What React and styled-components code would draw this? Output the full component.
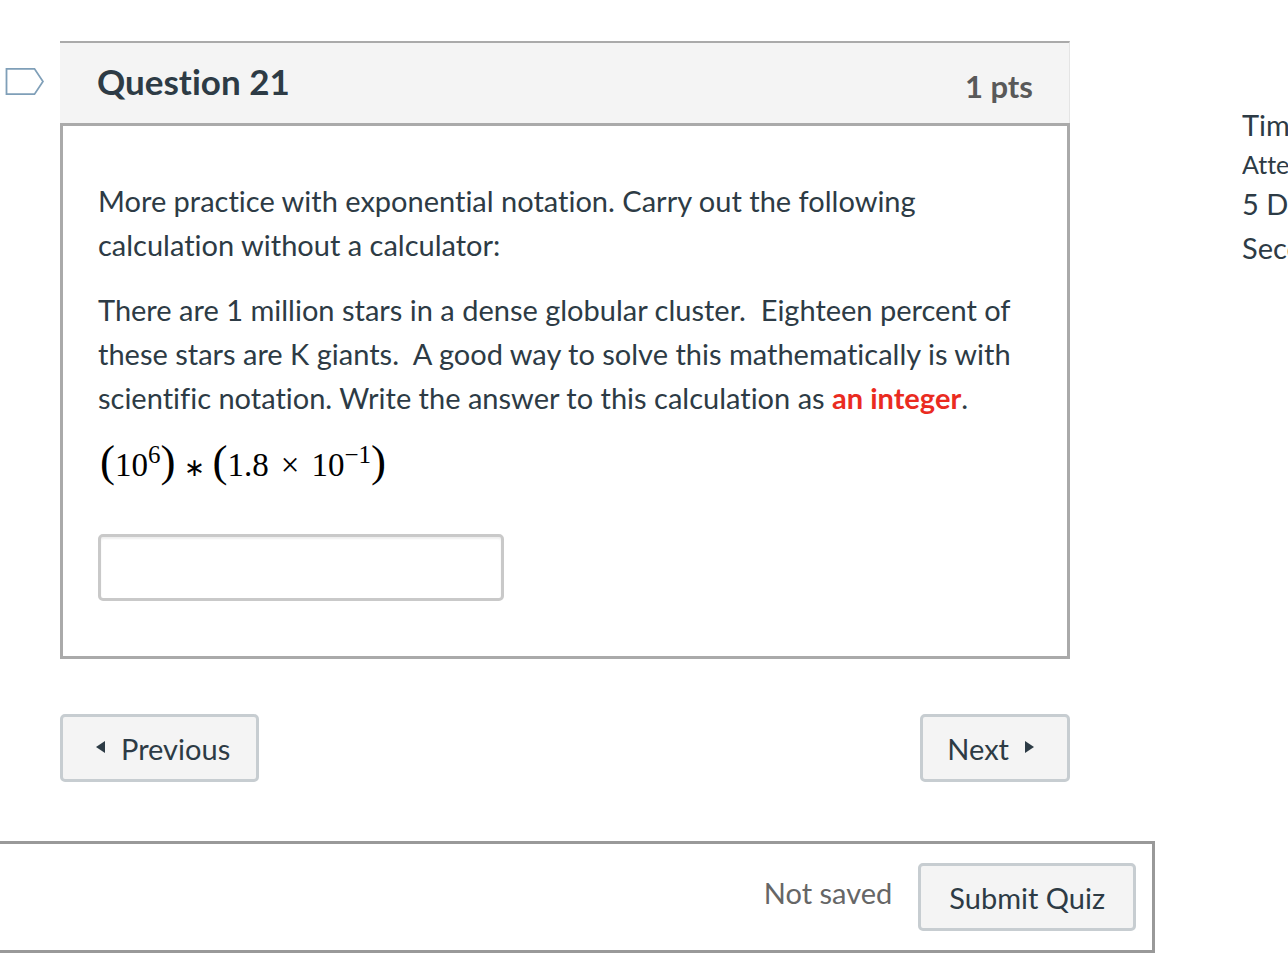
import React from "react";
import styled, { createGlobalStyle } from "styled-components";

const GlobalStyle = createGlobalStyle`
  *, *::before, *::after { box-sizing: border-box; }
  body {
    margin: 0;
    background: #fff;
    color: #2d3b45;
    font-family: Lato, "Liberation Sans", sans-serif;
    font-size: 29px;
    font-variant-ligatures: none;
    line-height: 44px;
    -webkit-font-smoothing: antialiased;
  }
`;

const Page = styled.div`
  display: flex;
  align-items: flex-start;
  padding-top: 41px;
  overflow: hidden;
`;

const Main = styled.main`
  flex: 1;
  min-width: 0;
`;

const QuestionRow = styled.div`
  display: grid;
  grid-template-columns: 60px 1fr;
  align-items: start;
  padding-right: 85px;
`;

const FlagButton = styled.button`
  display: block;
  margin: 26px 0 0 5px;
  padding: 0;
  border: 0;
  background: none;
  cursor: pointer;

  svg { display: block; }
`;

const Card = styled.article`
  min-width: 0;
`;

const CardHeader = styled.header`
  display: flex;
  justify-content: space-between;
  padding: 16px 36px 20px 37px;
  border-top: 2px solid #aaa;
  border-right: 1px solid #e4e4e4;
  background: #f4f4f4;
`;

const Title = styled.h2`
  margin: 0;
  font-size: 35px;
  line-height: 44px;
  font-weight: 700;
`;

const Points = styled.span`
  padding-top: 10px;
  color: #595959;
  font-size: 31px;
  line-height: 34px;
  font-weight: 700;
`;

const CardBody = styled.div`
  padding: 53px 35px 55px;
  border: 3px solid #aaa;
`;

const Paragraph = styled.p`
  margin: 0 0 21px;
`;

const Emphasis = styled.strong`
  color: #ea2b1f;
  font-weight: 700;
`;

const Formula = styled.div`
  display: flex;
  align-items: baseline;
  height: 44px;
  margin-bottom: 49px;
  padding-left: 2px;
  color: #000;
  font-family: "Liberation Serif", serif;
  font-size: 33px;
  line-height: 40px;
`;

const Paren = styled.span`
  font-size: 45px;
`;

const Operator = styled.span`
  padding: 0 ${(p) => (p.$small ? 8 : 12)}px;
  font-size: ${(p) => (p.$small ? 25 : 33)}px;
`;

const Power = styled.sup`
  align-self: flex-start;
  font-size: 25px;
  line-height: 28px;
`;

const AnswerInput = styled.input`
  display: block;
  width: 406px;
  max-width: 100%;
  height: 67px;
  padding: 8px 16px;
  border: 3px solid #c9c9c9;
  border-radius: 5px;
  box-shadow: inset 0 2px 2px rgba(0, 0, 0, 0.07);
  background: #fff;
  color: inherit;
  font: inherit;
`;

const Button = styled.button`
  display: inline-flex;
  align-items: center;
  gap: ${(p) => p.$gap || 0}px;
  height: 68px;
  padding: 2px ${(p) => p.$end || 28}px 0 ${(p) => p.$start || 28}px;
  border: 3px solid #c7cdd1;
  border-radius: 5px;
  background: #f4f4f4;
  color: inherit;
  font: inherit;
  white-space: nowrap;
  cursor: pointer;

  svg { display: block; margin-bottom: 4px; }
`;

const Navigation = styled.nav`
  display: flex;
  justify-content: space-between;
  padding: 55px 85px 59px 60px;
`;

const SubmitBar = styled.footer`
  display: flex;
  justify-content: flex-end;
  gap: 26px;
  padding: 19px 16px 19px 0;
  border: solid #999;
  border-width: 3px 3px 3px 0;
`;

const SaveStatus = styled.span`
  padding-top: 8px;
  color: #666;
`;

const Sidebar = styled.aside`
  flex: none;
  width: 46px;
  margin: 62px 0 0 87px;
  overflow: hidden;
  white-space: nowrap;
`;

const SidebarLine = styled.div`
  font-size: ${(p) => (p.$small ? 25 : 29)}px;
  line-height: ${(p) => (p.$small ? 35 : 44)}px;
`;

export default function App() {
  return (
    <>
      <GlobalStyle />
      <Page>
        <Main>
          <QuestionRow>
            <FlagButton type="button" aria-label="Flag question 21">
              <svg width="39" height="29" viewBox="0 0 39 29" fill="none">
                <path d="M1.5 1.8H29.5L38 14.5L29.5 27.2H1.5Z" stroke="#7f9fb8" strokeWidth="1.8" />
              </svg>
            </FlagButton>
            <Card>
              <CardHeader>
                <Title>Question 21</Title>
                <Points>1 pts</Points>
              </CardHeader>
              <CardBody>
                <Paragraph>
                  More practice with exponential notation. Carry out the following calculation
                  without a calculator:
                </Paragraph>
                <Paragraph>
                  There are 1 million stars in a dense globular cluster.&nbsp; Eighteen percent of
                  these stars are K giants.&nbsp; A good way to solve this mathematically is with
                  scientific notation. Write the answer to this calculation as{" "}
                  <Emphasis>an integer</Emphasis>.
                </Paragraph>
                <Formula>
                  <Paren>(</Paren>10<Power>6</Power><Paren>)</Paren>
                  <Operator $small>∗</Operator>
                  <Paren>(</Paren>1.8<Operator>×</Operator>10<Power>−1</Power><Paren>)</Paren>
                </Formula>
                <AnswerInput type="text" aria-label="Answer" />
              </CardBody>
            </Card>
          </QuestionRow>
          <Navigation aria-label="Questions">
            <Button type="button" $start={33} $end={26} $gap={16}>
              <svg width="9" height="12" viewBox="0 0 9 12" fill="currentColor">
                <path d="M9 0V12L0 6Z" />
              </svg>
              Previous
            </Button>
            <Button type="button" $start={24} $end={33} $gap={16}>
              Next
              <svg width="9" height="12" viewBox="0 0 9 12" fill="currentColor">
                <path d="M0 0V12L9 6Z" />
              </svg>
            </Button>
          </Navigation>
          <SubmitBar>
            <SaveStatus role="status">Not saved</SaveStatus>
            <Button type="submit">Submit Quiz</Button>
          </SubmitBar>
        </Main>
        <Sidebar>
          <SidebarLine>Time</SidebarLine>
          <SidebarLine $small>Attempt</SidebarLine>
          <SidebarLine>5 Days</SidebarLine>
          <SidebarLine>Seconds</SidebarLine>
        </Sidebar>
      </Page>
    </>
  );
}
